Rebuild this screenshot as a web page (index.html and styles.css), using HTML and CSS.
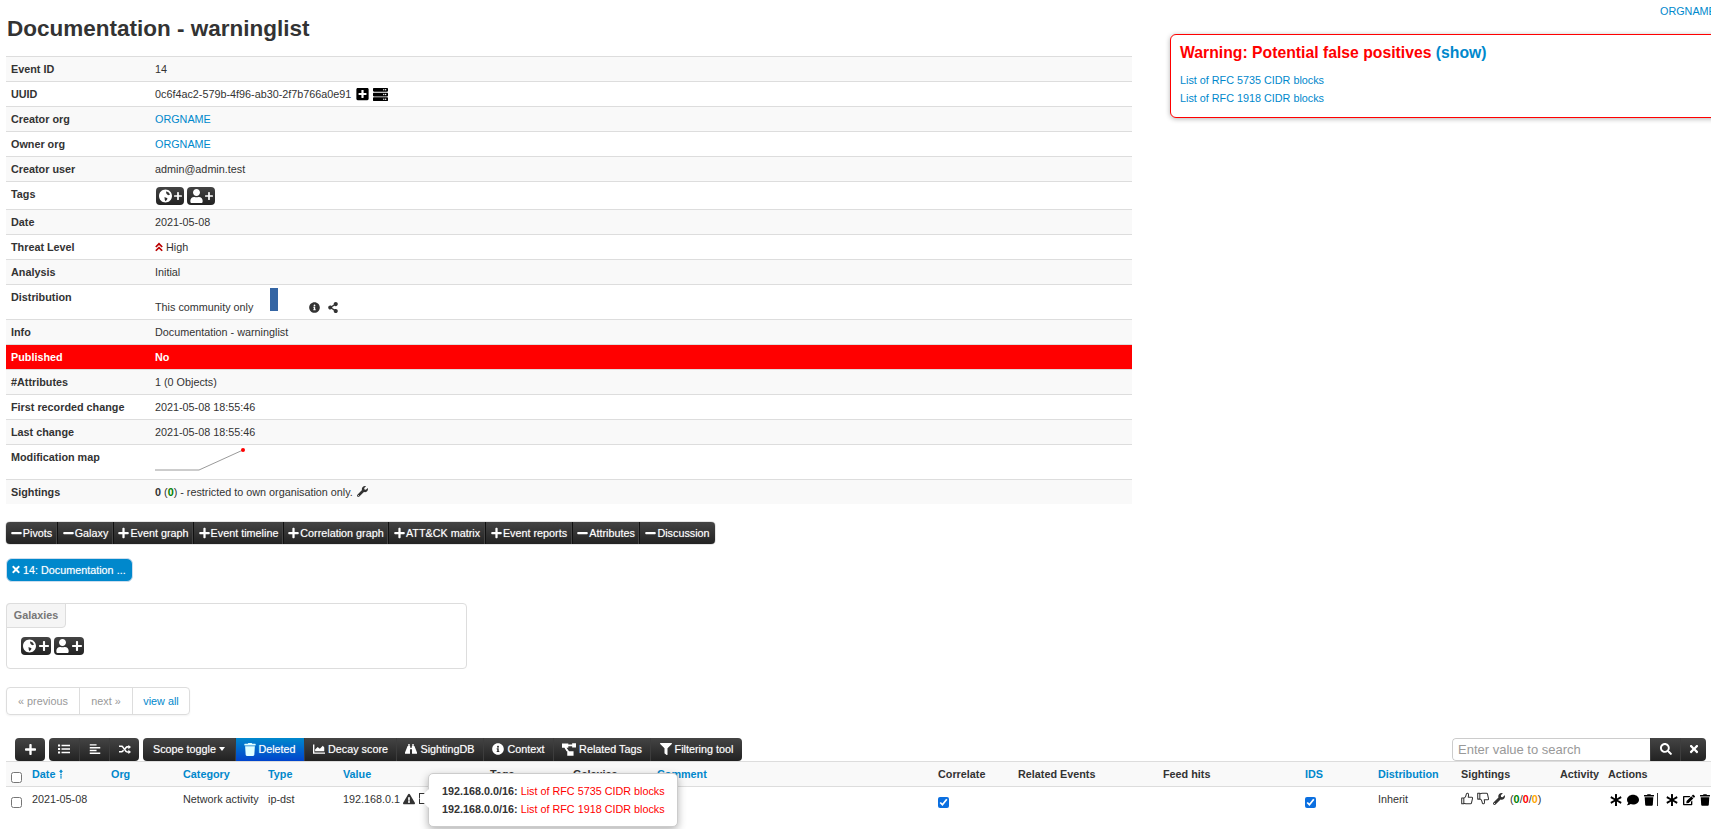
FILE: index.html
```html
<!DOCTYPE html>
<html lang="en">
<head>
<meta charset="utf-8">
<title>Documentation - warninglist</title>
<link rel="stylesheet" href="styles.css">
</head>
<body>
<svg class="sprite" xmlns="http://www.w3.org/2000/svg">
<symbol id="i-plus" viewBox="0 0 448 512"><path d="M416 208H272V64c0-17.67-14.33-32-32-32h-32c-17.67 0-32 14.33-32 32v144H32c-17.67 0-32 14.33-32 32v32c0 17.67 14.33 32 32 32h144v144c0 17.67 14.33 32 32 32h32c17.67 0 32-14.33 32-32V304h144c17.67 0 32-14.33 32-32v-32c0-17.67-14.33-32-32-32z"/></symbol>
<symbol id="i-minus" viewBox="0 0 448 512"><path d="M416 208H32c-17.67 0-32 14.33-32 32v32c0 17.67 14.33 32 32 32h384c17.67 0 32-14.33 32-32v-32c0-17.67-14.33-32-32-32z"/></symbol>
<symbol id="i-times" viewBox="0 0 352 512"><path d="M242.72 256l100.07-100.07c12.28-12.28 12.28-32.19 0-44.48l-22.24-22.24c-12.28-12.28-32.19-12.28-44.48 0L176 189.28 75.93 89.21c-12.28-12.28-32.19-12.28-44.48 0L9.21 111.45c-12.28 12.28-12.28 32.19 0 44.48L109.28 256 9.21 356.07c-12.28 12.28-12.28 32.19 0 44.48l22.24 22.24c12.28 12.28 32.2 12.28 44.48 0L176 322.72l100.07 100.07c12.28 12.28 32.2 12.28 44.48 0l22.24-22.24c12.28-12.28 12.28-32.19 0-44.48L242.72 256z"/></symbol>
<symbol id="i-search" viewBox="0 0 512 512"><path d="M505 442.7L405.3 343c-4.5-4.5-10.6-7-17-7H372c27.6-35.3 44-79.7 44-128C416 93.1 322.9 0 208 0S0 93.1 0 208s93.1 208 208 208c48.3 0 92.7-16.4 128-44v16.3c0 6.4 2.5 12.5 7 17l99.7 99.7c9.4 9.4 24.6 9.4 33.9 0l28.3-28.3c9.4-9.4 9.4-24.6.1-34zM208 336c-70.7 0-128-57.2-128-128 0-70.7 57.2-128 128-128 70.7 0 128 57.2 128 128 0 70.7-57.2 128-128 128z"/></symbol>
<symbol id="i-trash" viewBox="0 0 448 512"><path d="M432 32H312l-9.4-18.7A24 24 0 0 0 281.1 0H166.8a23.72 23.72 0 0 0-21.4 13.3L136 32H16A16 16 0 0 0 0 48v32a16 16 0 0 0 16 16h416a16 16 0 0 0 16-16V48a16 16 0 0 0-16-16zM53.2 467a48 48 0 0 0 47.9 45h245.8a48 48 0 0 0 47.9-45L416 128H32z"/></symbol>
<symbol id="i-comment" viewBox="0 0 512 512"><path d="M256 32C114.6 32 0 125.1 0 240c0 49.6 21.4 95 57 130.7C44.5 421.1 2.7 466 2.2 466.5c-2.2 2.3-2.8 5.7-1.5 8.7S4.8 480 8 480c66.3 0 116-31.8 140.6-51.4 32.7 12.3 69 19.4 107.4 19.4 141.4 0 256-93.1 256-208S397.4 32 256 32z"/></symbol>
<symbol id="i-asterisk" viewBox="0 0 512 512"><path d="M478.21 334.093L336 256l142.21-78.093c11.795-6.477 15.961-21.384 9.232-33.037l-19.48-33.741c-6.728-11.653-21.72-15.499-33.227-8.523L296 186.718l3.475-162.204C299.763 11.061 288.937 0 275.48 0h-38.96c-13.456 0-24.283 11.061-23.994 24.514L216 186.718 77.265 102.607c-11.506-6.976-26.499-3.13-33.227 8.523l-19.48 33.741c-6.728 11.653-2.562 26.56 9.233 33.037L176 256 33.79 334.093c-11.795 6.477-15.961 21.384-9.232 33.037l19.48 33.741c6.728 11.653 21.721 15.499 33.227 8.523L216 325.282l-3.475 162.204C212.237 500.939 223.064 512 236.52 512h38.961c13.456 0 24.283-11.061 23.995-24.514L296 325.282l138.735 84.111c11.506 6.976 26.499 3.13 33.227-8.523l19.48-33.741c6.728-11.653 2.563-26.559-9.232-33.036z"/></symbol>
<symbol id="i-filter" viewBox="0 0 512 512"><path d="M487.976 0H24.028C2.71 0-8.047 25.866 7.058 40.971L192 225.941V432c0 7.831 3.821 15.17 10.237 19.662l80 55.98C298.02 518.69 320 507.493 320 487.98V225.941l184.947-184.97C520.021 25.896 509.338 0 487.976 0z"/></symbol>
<symbol id="i-warn" viewBox="0 0 576 512"><path d="M569.517 440.013C587.975 472.007 564.806 512 527.94 512H48.054c-36.937 0-59.999-40.055-41.577-71.987L246.423 23.985c18.467-32.009 64.72-31.951 83.154 0l239.94 416.028zM288 354c-25.405 0-46 20.595-46 46s20.595 46 46 46 46-20.595 46-46-20.595-46-46-46zm-43.673-165.346l7.418 136c.347 6.364 5.609 11.346 11.982 11.346h48.546c6.373 0 11.635-4.982 11.982-11.346l7.418-136c.375-6.874-5.098-12.654-11.982-12.654h-63.383c-6.884 0-12.356 5.78-11.981 12.654z"/></symbol>
<symbol id="i-info" viewBox="0 0 512 512"><path d="M256 8C119.043 8 8 119.083 8 256c0 136.997 111.043 248 248 248s248-111.003 248-248C504 119.083 392.957 8 256 8zm0 110c23.196 0 42 18.804 42 42s-18.804 42-42 42-42-18.804-42-42 18.804-42 42-42zm56 254c0 6.627-5.373 12-12 12h-88c-6.627 0-12-5.373-12-12v-24c0-6.627 5.373-12 12-12h12v-64h-12c-6.627 0-12-5.373-12-12v-24c0-6.627 5.373-12 12-12h64c6.627 0 12 5.373 12 12v100h12c6.627 0 12 5.373 12 12v24z"/></symbol>
<symbol id="i-share" viewBox="0 0 448 512"><path d="M352 320c-22.608 0-43.387 7.819-59.79 20.895l-102.486-64.054a96.551 96.551 0 0 0 0-41.683l102.486-64.054C308.613 184.181 329.392 192 352 192c53.019 0 96-42.981 96-96S405.019 0 352 0s-96 42.981-96 96c0 7.158.79 14.13 2.276 20.841L155.79 180.895C139.387 167.819 118.608 160 96 160c-53.019 0-96 42.981-96 96s42.981 96 96 96c22.608 0 43.387-7.819 59.79-20.895l102.486 64.054A96.301 96.301 0 0 0 256 416c0 53.019 42.981 96 96 96s96-42.981 96-96-42.981-96-96-96z"/></symbol>
<symbol id="i-wrench" viewBox="0 0 512 512"><path d="M507.73 109.1c-2.24-9.03-13.54-12.09-20.12-5.51l-74.36 74.36-67.88-11.31-11.31-67.88 74.36-74.36c6.62-6.62 3.43-17.9-5.66-20.16-47.38-11.74-99.55.91-136.58 37.93-39.64 39.64-50.55 97.1-34.05 147.2L18.74 402.76c-24.99 24.99-24.99 65.51 0 90.5 24.99 24.99 65.51 24.99 90.5 0l213.21-213.21c50.12 16.71 107.47 5.68 147.37-34.22 37.07-37.07 49.7-89.32 37.91-136.73zM64 472c-13.25 0-24-10.75-24-24 0-13.26 10.75-24 24-24s24 10.74 24 24c0 13.25-10.75 24-24 24z"/></symbol>
<symbol id="i-user" viewBox="0 0 448 512"><path d="M224 256c70.7 0 128-57.3 128-128S294.7 0 224 0 96 57.3 96 128s57.3 128 128 128zm89.6 32h-16.7c-22.2 10.2-46.9 16-72.9 16s-50.6-5.8-72.9-16h-16.7C60.2 288 0 348.2 0 422.4V464c0 26.5 21.5 48 48 48h352c26.5 0 48-21.5 48-48v-41.6c0-74.2-60.2-134.4-134.4-134.4z"/></symbol>
<symbol id="i-globe" viewBox="0 0 496 512"><path fill-rule="evenodd" d="M248 8C111 8 0 119 0 256s111 248 248 248 248-111 248-248S385 8 248 8zM280 70l90 50 50 80-50 30-60-30-40-60zM210 290l60 30 50 10-10 60-60 70-30-60z"/></symbol>
<symbol id="i-plus-square" viewBox="0 0 448 512"><path d="M400 32H48C21.5 32 0 53.5 0 80v352c0 26.5 21.5 48 48 48h352c26.5 0 48-21.5 48-48V80c0-26.5-21.5-48-48-48zm-32 252c0 6.6-5.4 12-12 12h-92v92c0 6.6-5.4 12-12 12h-56c-6.6 0-12-5.4-12-12v-92H92c-6.6 0-12-5.4-12-12v-56c0-6.6 5.4-12 12-12h92v-92c0-6.6 5.4-12 12-12h56c6.6 0 12 5.4 12 12v92h92c6.6 0 12 5.4 12 12v56z"/></symbol>
<symbol id="i-server" viewBox="0 0 512 512"><path d="M480 160H32c-17.673 0-32-14.327-32-32V64c0-17.673 14.327-32 32-32h448c17.673 0 32 14.327 32 32v64c0 17.673-14.327 32-32 32zm-48-88c-13.255 0-24 10.745-24 24s10.745 24 24 24 24-10.745 24-24-10.745-24-24-24zm-64 0c-13.255 0-24 10.745-24 24s10.745 24 24 24 24-10.745 24-24-10.745-24-24-24zm112 248H32c-17.673 0-32-14.327-32-32v-64c0-17.673 14.327-32 32-32h448c17.673 0 32 14.327 32 32v64c0 17.673-14.327 32-32 32zm-48-88c-13.255 0-24 10.745-24 24s10.745 24 24 24 24-10.745 24-24-10.745-24-24-24zm-64 0c-13.255 0-24 10.745-24 24s10.745 24 24 24 24-10.745 24-24-10.745-24-24-24zm112 248H32c-17.673 0-32-14.327-32-32v-64c0-17.673 14.327-32 32-32h448c17.673 0 32 14.327 32 32v64c0 17.673-14.327 32-32 32zm-48-88c-13.255 0-24 10.745-24 24s10.745 24 24 24 24-10.745 24-24-10.745-24-24-24zm-64 0c-13.255 0-24 10.745-24 24s10.745 24 24 24 24-10.745 24-24-10.745-24-24-24z"/></symbol>
<symbol id="i-chev" viewBox="0 0 448 512"><path d="M224 10L10 224l70 60 144-144 144 144 70-60zM224 226L10 440l70 60 144-144 144 144 70-60z"/></symbol>
<symbol id="i-list" viewBox="0 0 512 512"><path d="M0 60h90v90H0zM0 210h90v90H0zM0 360h90v90H0zM150 70h362v70H150zM150 220h362v70H150zM150 370h362v70H150z"/></symbol>
<symbol id="i-align" viewBox="0 0 448 512"><path d="M0 50h290v60H0zM0 170h448v60H0zM0 290h290v60H0zM0 410h448v60H0z"/></symbol>
<symbol id="i-random" viewBox="0 0 512 512"><path d="M0 110h110c40 0 60 20 90 60l110 150c20 25 30 32 60 32h30v-62l112 92-112 92v-62h-40c-50 0-75-20-105-62L146 200c-15-20-25-30-50-30H0zM0 342h96c25 0 35-10 50-30l30-40 40 55-25 33c-30 42-50 42-95 42H0zM400 80l112 92-112 92v-62h-30c-30 0-40 7-60 32l-30 40-40-55 25-33c30-42 55-56 105-56h25z"/></symbol>
<symbol id="i-chart" viewBox="0 0 512 512"><path d="M0 60h60v340h452v60H0z"/><path d="M90 350V280l110-110 90 80 130-130 60 70v160z"/></symbol>
<symbol id="i-binoculars" viewBox="0 0 512 512"><path d="M130 50h80v70h-80zM302 50h80v70h-80zM110 130h110v70h72v-70h110l110 270v60H300V270h-88v190H0v-60z"/></symbol>
<symbol id="i-tree" viewBox="0 0 40 36"><path d="M0 1h18v12H0zM29 0h11v12H29zM15 23h18v13H15zM18 4h11v5H18zM7 13h6l7 10h-7z"/></symbol>
<symbol id="i-edit" viewBox="0 0 576 512"><path d="M402.6 83.2l90.2 90.2c3.8 3.8 3.8 10 0 13.8L274.4 405.6l-92.8 10.3c-12.4 1.4-22.9-9.1-21.5-21.5l10.3-92.8L388.8 83.2c3.8-3.8 10-3.8 13.8 0zm162-22.9l-48.8-48.8c-15.2-15.2-39.9-15.2-55.2 0l-35.4 35.4c-3.8 3.8-3.8 10 0 13.8l90.2 90.2c3.8 3.8 10 3.8 13.8 0l35.4-35.4c15.2-15.3 15.2-40 0-55.2zM384 346.2V448H64V128h229.8c3.2 0 6.2-1.3 8.5-3.5l40-40c7.6-7.6 2.2-20.5-8.5-20.5H48C21.5 64 0 85.5 0 112v352c0 26.5 21.5 48 48 48h352c26.5 0 48-21.5 48-48V306.2c0-10.7-12.9-16-20.5-8.5l-40 40c-2.2 2.3-3.5 5.3-3.5 8.5z"/></symbol>
<symbol id="i-thumb-up" viewBox="0 0 512 512"><path fill="none" stroke="currentColor" stroke-width="44" stroke-linejoin="round" d="M30 230h90v250H30zM120 250c60-30 90-80 100-150 5-50 30-80 70-70 40 10 40 70 20 170h150c30 0 40 30 30 60l-45 190c-5 20-20 30-40 30H230c-50 0-70-20-110-20z"/></symbol>
<symbol id="i-thumb-down" viewBox="0 0 512 512"><path fill="none" stroke="currentColor" stroke-width="44" stroke-linejoin="round" transform="matrix(1 0 0 -1 0 512)" d="M30 230h90v250H30zM120 250c60-30 90-80 100-150 5-50 30-80 70-70 40 10 40 70 20 170h150c30 0 40 30 30 60l-45 190c-5 20-20 30-40 30H230c-50 0-70-20-110-20z"/></symbol>
<symbol id="i-sort" viewBox="0 0 320 512"><path d="M160 20l110 120H200v60h-80v-60H50zM120 240h80v70h-80zM120 340h80v60h-80zM120 430h80v62h-80z"/></symbol>
</svg>

<div class="top">
  <main class="left">
    <h2 class="title">Documentation - warninglist</h2>
    <table class="meta">
      <tbody>
        <tr><th>Event ID</th><td>14</td></tr>
        <tr><th>UUID</th><td><span class="uuid">0c6f4ac2-579b-4f96-ab30-2f7b766a0e91<svg class="ic ic-14"><use href="#i-plus-square"/></svg><svg class="ic ic-15"><use href="#i-server"/></svg></span></td></tr>
        <tr><th>Creator org</th><td><a href="#">ORGNAME</a></td></tr>
        <tr><th>Owner org</th><td><a href="#">ORGNAME</a></td></tr>
        <tr><th>Creator user</th><td>admin@admin.test</td></tr>
        <tr class="row-tags"><th>Tags</th><td><span class="tag-btns"><span class="tag-btn"><svg class="ic ic-g"><use href="#i-globe"/></svg><svg class="ic ic-p"><use href="#i-plus"/></svg></span><span class="tag-btn"><svg class="ic ic-g"><use href="#i-user"/></svg><svg class="ic ic-p"><use href="#i-plus"/></svg></span></span></td></tr>
        <tr><th>Date</th><td>2021-05-08</td></tr>
        <tr><th>Threat Level</th><td><svg class="ic ic-chev"><use href="#i-chev"/></svg> High</td></tr>
        <tr><th>Analysis</th><td>Initial</td></tr>
        <tr class="row-dist"><th>Distribution</th><td><div class="dist"><span>This community only</span><span class="dist-bar"></span><svg class="ic ic-info"><use href="#i-info"/></svg><svg class="ic ic-share"><use href="#i-share"/></svg></div></td></tr>
        <tr><th>Info</th><td>Documentation - warninglist</td></tr>
        <tr class="row-pub"><th>Published</th><td>No</td></tr>
        <tr><th>#Attributes</th><td>1 (0 Objects)</td></tr>
        <tr><th>First recorded change</th><td>2021-05-08 18:55:46</td></tr>
        <tr><th>Last change</th><td>2021-05-08 18:55:46</td></tr>
        <tr class="row-map"><th>Modification map</th><td><svg class="modmap" viewBox="0 0 100 30"><polyline points="0,25 44,25 88,5" fill="none" stroke="#9a9a9a" stroke-width="1"/><circle cx="88" cy="5" r="2" fill="#f00"/></svg></td></tr>
        <tr class="row-last"><th>Sightings</th><td><b>0</b> (<b class="green">0</b>) - restricted to own organisation only. <svg class="ic ic-wrench"><use href="#i-wrench"/></svg></td></tr>
      </tbody>
    </table>
  </main>
  <aside class="right">
    <div class="me"><a href="#">ORGNAME</a></div>
    <div class="warning">
      <h3 class="warning-title">Warning: Potential false positives <a href="#">(show)</a></h3>
      <a class="warning-link" href="#">List of RFC 5735 CIDR blocks</a>
      <a class="warning-link" href="#">List of RFC 1918 CIDR blocks</a>
    </div>
  </aside>
</div>

<nav class="tabs">
  <a class="tab w-pivots"><svg class="ic ic-t"><use href="#i-minus"/></svg>Pivots</a>
  <a class="tab w-galaxy"><svg class="ic ic-t"><use href="#i-minus"/></svg>Galaxy</a>
  <a class="tab w-graph"><svg class="ic ic-t"><use href="#i-plus"/></svg>Event graph</a>
  <a class="tab w-timeline"><svg class="ic ic-t"><use href="#i-plus"/></svg>Event timeline</a>
  <a class="tab w-corr"><svg class="ic ic-t"><use href="#i-plus"/></svg>Correlation graph</a>
  <a class="tab w-attck"><svg class="ic ic-t"><use href="#i-plus"/></svg>ATT&amp;CK matrix</a>
  <a class="tab w-reports"><svg class="ic ic-t"><use href="#i-plus"/></svg>Event reports</a>
  <a class="tab w-attr"><svg class="ic ic-t"><use href="#i-minus"/></svg>Attributes</a>
  <a class="tab w-disc"><svg class="ic ic-t"><use href="#i-minus"/></svg>Discussion</a>
</nav>

<div class="pill"><svg class="ic ic-x"><use href="#i-times"/></svg><span class="pill-text">14: Documentation ...</span></div>

<section class="galaxies">
  <div class="galaxies-label">Galaxies</div>
  <div class="galaxies-btns">
    <span class="tag-btn"><svg class="ic ic-g"><use href="#i-globe"/></svg><svg class="ic ic-p"><use href="#i-plus"/></svg></span>
    <span class="tag-btn"><svg class="ic ic-g"><use href="#i-user"/></svg><svg class="ic ic-p"><use href="#i-plus"/></svg></span>
  </div>
</section>

<div class="pager">
  <span class="pager-item w-prev">« previous</span>
  <span class="pager-item w-next">next »</span>
  <a class="pager-item w-all" href="#">view all</a>
</div>

<div class="bar">
  <div class="bar-group"><button class="btn w-add"><svg class="ic ic-bb"><use href="#i-plus"/></svg></button></div>
  <div class="bar-group">
    <button class="btn w-ico"><svg class="ic ic-bi"><use href="#i-list"/></svg></button>
    <button class="btn w-ico"><svg class="ic ic-bi"><use href="#i-align"/></svg></button>
    <button class="btn w-ico"><svg class="ic ic-bi"><use href="#i-random"/></svg></button>
  </div>
  <div class="bar-group">
    <button class="btn w-scope">Scope toggle<span class="caret"></span></button>
    <button class="btn btn-on w-del"><svg class="ic ic-bi ic-del"><use href="#i-trash"/></svg>Deleted</button>
    <button class="btn w-decay"><svg class="ic ic-bi"><use href="#i-chart"/></svg>Decay score</button>
    <button class="btn w-sdb"><svg class="ic ic-bi"><use href="#i-binoculars"/></svg>SightingDB</button>
    <button class="btn w-ctx"><svg class="ic ic-bi"><use href="#i-info"/></svg>Context</button>
    <button class="btn w-rel"><svg class="ic ic-bi ic-tree"><use href="#i-tree"/></svg>Related Tags</button>
    <button class="btn w-flt"><svg class="ic ic-bi"><use href="#i-filter"/></svg>Filtering tool</button>
  </div>
  <div class="search">
    <input class="search-input" type="text" placeholder="Enter value to search">
    <button class="btn w-s1"><svg class="ic ic-bs"><use href="#i-search"/></svg></button>
    <button class="btn w-s2"><svg class="ic ic-bs"><use href="#i-times"/></svg></button>
  </div>
</div>

<table class="attrs">
  <colgroup>
    <col class="c0"><col class="c1"><col class="c2"><col class="c3"><col class="c4"><col class="c5"><col class="c6"><col class="c7"><col class="c8"><col class="c9"><col class="c10"><col class="c11"><col class="c12"><col class="c13"><col class="c14"><col class="c15"><col class="c16">
  </colgroup>
  <thead>
    <tr>
      <th><input class="cb" type="checkbox"></th>
      <th><a href="#">Date <svg class="ic ic-sort"><use href="#i-sort"/></svg></a></th>
      <th><a href="#">Org</a></th>
      <th><a href="#">Category</a></th>
      <th><a href="#">Type</a></th>
      <th><a href="#">Value</a></th>
      <th>Tags</th>
      <th>Galaxies</th>
      <th><a href="#">Comment</a></th>
      <th>Correlate</th>
      <th>Related Events</th>
      <th>Feed hits</th>
      <th><a href="#">IDS</a></th>
      <th><a href="#">Distribution</a></th>
      <th>Sightings</th>
      <th>Activity</th>
      <th>Actions</th>
    </tr>
  </thead>
  <tbody>
    <tr>
      <td><input class="cb" type="checkbox"></td>
      <td>2021-05-08</td>
      <td></td>
      <td>Network activity</td>
      <td>ip-dst</td>
      <td>
        <span class="value">192.168.0.1<svg class="ic ic-warn"><use href="#i-warn"/></svg><span class="partial"></span>
          <div class="tip">
            <p class="tip-line"><b>192.168.0.0/16:</b> <span class="red">List of RFC 5735 CIDR blocks</span></p>
            <p class="tip-line"><b>192.168.0.0/16:</b> <span class="red">List of RFC 1918 CIDR blocks</span></p>
          </div>
        </span>
      </td>
      <td></td>
      <td></td>
      <td></td>
      <td><input class="cb cb-on" type="checkbox" checked></td>
      <td></td>
      <td></td>
      <td><input class="cb cb-on" type="checkbox" checked></td>
      <td>Inherit</td>
      <td><span class="sight"><svg class="ic ic-th"><use href="#i-thumb-up"/></svg><svg class="ic ic-th"><use href="#i-thumb-down"/></svg><svg class="ic ic-wr2"><use href="#i-wrench"/></svg><span>(<b class="green">0</b>/<b class="redb">0</b>/<b class="orange">0</b>)</span></span></td>
      <td></td>
      <td>
        <span class="actions">
          <svg class="ic ic-a"><use href="#i-asterisk"/></svg>
          <svg class="ic ic-a"><use href="#i-comment"/></svg>
          <svg class="ic ic-tr"><use href="#i-trash"/></svg>
          <span class="sep"></span>
          <svg class="ic ic-a"><use href="#i-asterisk"/></svg>
          <svg class="ic ic-a"><use href="#i-edit"/></svg>
          <svg class="ic ic-tr"><use href="#i-trash"/></svg>
        </span>
      </td>
    </tr>
  </tbody>
</table>
```

FILE: styles.css
```css
* { box-sizing: border-box; }
html, body { margin: 0; height: 829px; overflow: hidden; }
body { background: #fff; color: #333; font: 10.8px/18px "Liberation Sans", Arial, sans-serif; }
a { color: #0088cc; text-decoration: none; }
.sprite { display: none; }
.ic { display: inline-block; fill: currentColor; vertical-align: middle; }
.green { color: #008000; }
.red { color: #f00; }
.redb { color: #f00; }
.orange { color: #ffa500; }

.top { display: flex; align-items: flex-start; width: 1800px; }
.left { width: 1170px; flex: none; padding: 0 38px 0 6px; }
.title { margin: 0; height: 56px; padding: 16px 0 0 1px; font-size: 22.5px; line-height: 26px; font-weight: bold; color: #333; }

.meta { width: 100%; border-collapse: collapse; table-layout: fixed; }
.meta tr { height: 25px; }
.meta th, .meta td { border-top: 1px solid #ddd; padding: 3px 5px; line-height: 18px; text-align: left; vertical-align: top; }
.meta th { width: 144px; font-weight: bold; }
.meta tbody tr:nth-child(odd) th, .meta tbody tr:nth-child(odd) td { background: #f9f9f9; }
.meta tr.row-tags { height: 28px; }
.meta tr.row-dist { height: 35px; }
.meta tr.row-map { height: 35px; }
.meta tr.row-last { height: 24px; }
.meta tr.row-last th, .meta tr.row-last td { padding-bottom: 2px; }
.meta tr.row-pub th, .meta tr.row-pub td { background: #f00; color: #fff; font-weight: bold; }
.uuid { display: inline-flex; align-items: center; }
.ic-14 { width: 13px; height: 14px; margin-left: 5px; color: #000; }
.ic-15 { width: 15px; height: 15px; margin-left: 4px; color: #000; }
.ic-chev { width: 8px; height: 10px; color: #b00; vertical-align: -1px; }
.ic-wrench { width: 11px; height: 11px; vertical-align: -1px; margin-left: 1px; }

.tag-btns { display: flex; gap: 3px; margin: 2px 0 0 1px; }
.tag-btn { display: inline-flex; align-items: center; justify-content: space-between; width: 28px; height: 18px; padding: 0 2px 0 3px; border-radius: 4px; background: linear-gradient(#444, #222); color: #fff; }
.ic-g { width: 13px; height: 14px; }
.ic-p { width: 8px; height: 10px; }

.dist { display: flex; align-items: flex-end; height: 23px; }
.dist span:first-child { line-height: 14px; margin-bottom: -3px; width: 115px; }
.dist-bar { display: block; width: 8px; height: 23px; background: #3465a4; }
.ic-info { width: 11px; height: 11px; margin: 0 0 -2px 31px; }
.ic-share { width: 10px; height: 11px; margin: 0 0 -2px 8px; }
.modmap { display: block; width: 100px; height: 30px; margin: -3px 0 0; }

.right { flex: none; width: 630px; }
.me { height: 34px; padding: 2px 0 0 490px; }
.warning { width: 600px; height: 84px; padding: 6px 9px; border: 1px solid #f00; border-radius: 6px; box-shadow: 0 1px 5px rgba(0,0,0,.3); background: #fff; }
.warning-title { margin: 0 0 6px; font-size: 15.75px; line-height: 24px; font-weight: bold; color: #f00; }
.warning-link { display: block; line-height: 18px; }

.tabs { display: flex; width: 709px; height: 22px; margin: 18px 0 0 6px; border-radius: 4px; overflow: hidden; background: linear-gradient(#444, #222); box-shadow: 0 0 1px #000; }
.tab { display: flex; align-items: center; justify-content: center; color: #fff; text-shadow: 0 0 1px rgba(255,255,255,.5); border-right: 1px solid #111; box-shadow: inset -1px 0 0 #444; }
.tab:last-child { border-right: 0; box-shadow: none; }
.ic-t { width: 11px; height: 12px; margin-right: 1px; }
.w-pivots { width: 52px; }
.w-galaxy { width: 56px; }
.w-graph { width: 80px; }
.w-timeline { width: 90px; }
.w-corr { width: 105px; }
.w-attck { width: 97px; }
.w-reports { width: 87px; }
.w-attr { width: 67px; }
.w-disc { width: 75px; }

.pill { display: flex; align-items: center; width: 127px; height: 24px; margin: 14px 0 0 6px; padding-left: 5px; border: 1px solid #cde; border-radius: 6px; background: #0088cc; color: #fff; text-shadow: 0 0 1px rgba(255,255,255,.5); }
.pill-text { white-space: nowrap; }
.ic-x { width: 8px; height: 11px; margin-right: 3px; flex: none; }

.galaxies { width: 461px; height: 66px; margin: 21px 0 0 6px; border: 1px solid #ddd; border-radius: 4px; }
.galaxies-label { width: 60px; height: 25px; margin: -1px 0 0 -1px; border: 1px solid #ddd; border-radius: 4px 0 4px 0; background: #f5f5f5; color: #777; font-weight: bold; line-height: 23px; text-align: center; }
.galaxies-btns { display: flex; gap: 3px; padding: 9px 0 0 14px; }
.galaxies-btns .tag-btn { width: 30px; height: 18px; padding: 0 2px; }
.galaxies-btns .ic-p { width: 10px; height: 12px; }

.pager { display: flex; width: 184px; height: 28px; margin: 18px 0 0 6px; border: 1px solid #ddd; border-radius: 4px; box-shadow: 0 1px 2px rgba(0,0,0,.05); }
.pager-item { display: block; line-height: 26px; text-align: center; color: #999; border-right: 1px solid #ddd; }
a.pager-item { color: #0088cc; border-right: 0; }
.w-prev { width: 73px; }
.w-next { width: 53px; }
.w-all { width: 56px; }

.bar { display: flex; height: 23px; margin: 23px 0 0 15px; gap: 4px; }
.bar-group { display: flex; border-radius: 4px; overflow: hidden; }
.btn { display: flex; align-items: center; justify-content: center; height: 23px; padding: 0; border: 0; background: linear-gradient(#444, #222); color: #fff; font: 10.8px/18px "Liberation Sans", Arial, sans-serif; text-shadow: 0 0 1px rgba(255,255,255,.5); border-left: 1px solid #3d3d3d; }
.bar-group .btn:first-child { border-left: 0; }
.btn-on { background: linear-gradient(#08c, #04c); }
.ic-bb { width: 11px; height: 13px; }
.ic-bi { width: 12px; height: 12px; margin-right: 3px; }
.ic-del { height: 13px; margin-right: 2px; color: #dff; }
.ic-tree { width: 14px; height: 13px; }
.w-ico .ic-bi { margin: 0; }
.w-add { width: 30px; }
.w-ico { width: 30px; }
.w-scope { width: 92px; }
.w-del { width: 69px; }
.w-decay { width: 92px; }
.w-sdb { width: 87px; }
.w-ctx { width: 70px; }
.w-rel { width: 97px; }
.w-flt { width: 92px; }
.caret { display: inline-block; margin-left: 3px; border: 3px solid transparent; border-top: 4px solid #fff; border-bottom: 0; }
.search { display: flex; margin-left: auto; margin-right: 5px; border-radius: 4px; overflow: hidden; }
.search-input { width: 198px; height: 23px; padding: 2px 5px; border: 1px solid #ccc; border-right: 0; border-radius: 4px 0 0 4px; font: 13px "Liberation Sans", Arial, sans-serif; color: #333; }
.search-input::placeholder { color: #999; opacity: 1; }
.ic-bs { width: 12px; height: 12px; }
.w-s1 { width: 30px; }
.w-s2 { width: 26px; }

.attrs { width: 1705px; margin-left: 6px; border-collapse: collapse; table-layout: fixed; }
.attrs th, .attrs td { padding: 3px 5px; text-align: left; vertical-align: top; line-height: 18px; white-space: nowrap; }
.attrs th { height: 25px; border-top: 1px solid #ddd; border-bottom: 1px solid #ddd; background: #f9f9f9; font-weight: bold; }
.attrs td { height: 34px; }
.c0 { width: 21px; }
.c1 { width: 79px; }
.c2 { width: 72px; }
.c3 { width: 85px; }
.c4 { width: 75px; }
.c5 { width: 147px; }
.c6 { width: 83px; }
.c7 { width: 84px; }
.c8 { width: 281px; }
.c9 { width: 80px; }
.c10 { width: 145px; }
.c11 { width: 142px; }
.c12 { width: 73px; }
.c13 { width: 83px; }
.c14 { width: 99px; }
.c15 { width: 48px; }
.c16 { width: 108px; }
.cb { display: block; width: 11px; height: 11px; margin: 7px 0 -2px; }
.cb-on { accent-color: #0b6fe0; }
.ic-sort { width: 6px; height: 10px; vertical-align: -1px; }
.value { position: relative; display: inline-block; }
.ic-warn { width: 12px; height: 12px; margin-left: 3px; vertical-align: -2px; color: #333; }
.partial { display: inline-block; width: 8px; height: 11px; margin-left: 4px; border: 1px solid #333; vertical-align: -1px; }
.tip { position: absolute; left: 85px; top: -17px; width: 250px; height: 54px; padding: 8px 13px; background: #fff; border: 1px solid #ccc; border-radius: 5px; box-shadow: 0 3px 8px rgba(0,0,0,.3); z-index: 2; }
.tip::before { content: ""; position: absolute; left: -7px; top: 18px; width: 13px; height: 13px; background: #fff; transform: rotate(45deg); }
.tip-line { position: relative; margin: 0; line-height: 18px; }
.sight { display: inline-flex; align-items: center; gap: 4px; height: 18px; }
.ic-th { width: 12px; height: 13px; }
.ic-wr2 { width: 12px; height: 12px; margin-right: 1px; }
.actions { display: inline-flex; align-items: center; height: 18px; margin-top: 1px; margin-left: 2px; }
.ic-a { width: 12px; height: 12px; margin-right: 5px; color: #000; }
.ic-tr { width: 10px; height: 12px; color: #000; }
.sep { width: 1px; height: 13px; background: #333; margin: 0 8px 0 3px; }
```
